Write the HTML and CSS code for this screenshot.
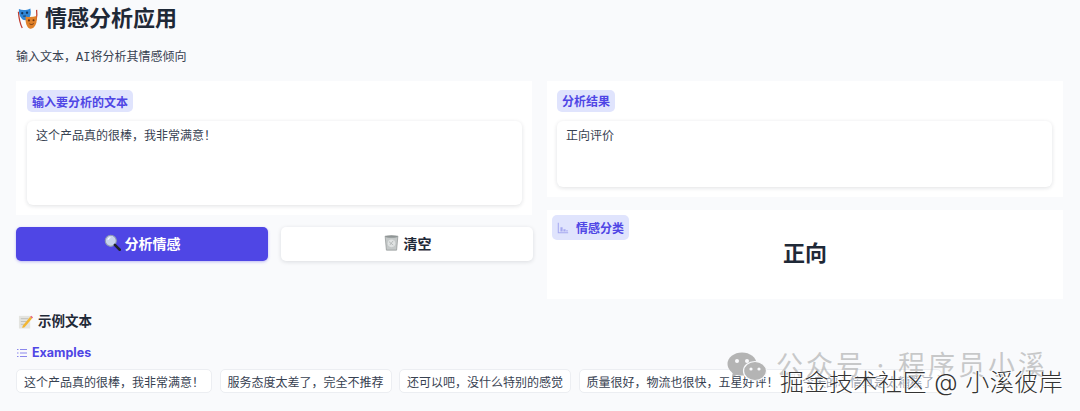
FILE: index.html
```html
<!DOCTYPE html>
<html lang="zh">
<head>
<meta charset="utf-8">
<title>情感分析应用</title>
<link rel="stylesheet" href="styles.css">
</head>
<body>
<main class="page">
  <h1 class="title">
    <svg class="emoji-title" viewBox="0 0 24 24" aria-hidden="true">
      <path d="M2.500 5c.5 6 1.500 12 4 17" fill="none" stroke="#c0392b" stroke-width="1.300"/>
      <path d="M21.500 3c.5 3 .3 7-.6 11" fill="none" stroke="#c0392b" stroke-width="1.300"/>
      <path d="M3 2c3 1.500 8 1.500 12-.5 1 5 .3 9-2.500 11.500-2.500 1.500-5.500 1-7-1.500C3.500 9 3 5.500 3 2z" fill="#2f86d6"/>
      <circle cx="6.500" cy="6.500" r="1.200" fill="#12345a"/><circle cx="11.500" cy="6" r="1.200" fill="#12345a"/>
      <path d="M7.500 9.500h3" stroke="#12345a" stroke-width="1"/>
      <path d="M10 10c3 .8 7 .8 11.500-.5.700 5-.3 9.500-3 12-2 1.800-5 1.500-6.500-1C10 18 9.800 14 10 10z" fill="#e0812a"/>
      <circle cx="13.500" cy="14" r="1.100" fill="#6b3410"/><circle cx="18.300" cy="13.800" r="1.100" fill="#6b3410"/>
      <path d="M14 17.500c1.500 1 3 1 4.500-.2" fill="none" stroke="#6b3410" stroke-width="1"/>
    </svg>
    <span>情感分析应用</span>
  </h1>
  <p class="subtitle">输入文本，<span class="mono">AI</span>将分析其情感倾向</p>

  <div class="columns">
    <section class="col">
      <div class="card card-input">
        <span class="pill">输入要分析的文本</span>
        <div class="field field-input">这个产品真的很棒，我非常满意！</div>
      </div>
      <div class="actions">
        <button class="btn btn-primary" type="button">
          <svg class="emoji-btn" viewBox="0 0 20 20" aria-hidden="true">
            <circle cx="8" cy="8" r="6.500" fill="#c7d3ee" stroke="#8e9ab0" stroke-width="1.300"/>
            <path d="M4.500 7a4 4 0 0 1 3-3" fill="none" stroke="#fff" stroke-width="1.200"/>
            <path d="M12.800 12.800L18.500 18.500" stroke="#20242c" stroke-width="3" stroke-linecap="round"/>
          </svg>
          <span>分析情感</span>
        </button>
        <button class="btn btn-secondary" type="button">
          <svg class="emoji-btn" viewBox="0 0 20 20" aria-hidden="true">
            <path d="M2.500 2.500h15l-1.500 16.500H4z" fill="#c4c8c8" stroke="#8d9292" stroke-width=".8"/>
            <ellipse cx="10" cy="3" rx="7.500" ry="1.500" fill="#8f9595"/>
            <circle cx="10" cy="11" r="4.500" fill="#dfe2e2"/>
            <path d="M7 9l5 4M8 13l4-5" stroke="#a5aaaa" stroke-width=".8"/>
          </svg>
          <span>清空</span>
        </button>
      </div>
    </section>

    <section class="col col-right">
      <div class="card card-result">
        <span class="pill">分析结果</span>
        <div class="field field-result">正向评价</div>
      </div>
      <div class="card card-class">
        <span class="pill pill-icon">
          <svg class="chart-icon" viewBox="0 0 14 14" aria-hidden="true">
            <path d="M1.500 1v11.500H13" fill="none" stroke="#a5a8f0" stroke-width="1.200"/>
            <path d="M4 6h2.500v5H4zM7.500 8.500H10V11H7.500zM10.800 9.500H12.500V11h-1.700z" fill="#a5a8f0"/>
          </svg>
          <span>情感分类</span>
        </span>
        <div class="class-value">正向</div>
      </div>
    </section>
  </div>

  <h2 class="section-title">
    <svg class="emoji-memo" viewBox="0 0 16 16" aria-hidden="true">
      <rect x="1" y="2" width="12" height="13.500" fill="#e4e4e0"/>
      <path d="M3 5h8M3 8h6M3 11h5" stroke="#b5b5b0" stroke-width=".8"/>
      <path d="M5 12.500L13 3l2 1.700L7 14l-2.500.8z" fill="#f2b632"/>
      <path d="M13 3l1-1.200 2 1.700-1 1.200z" fill="#e0607a"/>
    </svg>
    <span>示例文本</span>
  </h2>
  <div class="examples-label">
    <svg class="list-icon" viewBox="0 0 10 10" aria-hidden="true">
      <path d="M3 1.500h7M3 5h7M3 8.500h7" stroke="#8b86ec" stroke-width="1"/>
      <path d="M0 1.500h1.500M0 5h1.500M0 8.500h1.500" stroke="#8b86ec" stroke-width="1"/>
    </svg>
    <span>Examples</span>
  </div>
  <div class="chips">
    <button class="chip" type="button">这个产品真的很棒，我非常满意！</button>
    <button class="chip" type="button">服务态度太差了，完全不推荐</button>
    <button class="chip" type="button">还可以吧，没什么特别的感觉</button>
    <button class="chip" type="button">质量很好，物流也很快，五星好评！</button>
    <button class="chip chip-under" type="button">今天的心情真是太糟糕了</button>
  </div>
</main>

<div class="watermark">
  <svg class="wechat" viewBox="0 0 40 30" aria-hidden="true">
    <ellipse cx="15" cy="12" rx="14.500" ry="11.500" fill="#b4b4b4"/>
    <path d="M6 19l-1 6 7-3z" fill="#b4b4b4"/>
    <circle cx="10" cy="9" r="2" fill="#f9fafc"/><circle cx="20" cy="9" r="2" fill="#f9fafc"/>
    <ellipse cx="28" cy="19" rx="11.500" ry="9.500" fill="#b4b4b4" stroke="#f9fafc" stroke-width="1.200"/>
    <circle cx="24" cy="17" r="1.600" fill="#f9fafc"/><circle cx="32" cy="17" r="1.600" fill="#f9fafc"/>
  </svg>
  <span class="wm-account">公众号 · 程序员小溪</span>
  <span class="wm-site">掘金技术社区 @ 小溪彼岸</span>
</div>
</body>
</html>
```

FILE: styles.css
```css
* { box-sizing: border-box; }

html, body {
  margin: 0;
  height: 411px;
  overflow: hidden;
}

body {
  position: relative;
  background: #f9fafc;
  color: #1f2937;
  font-family: Inter, "Noto Sans CJK SC", sans-serif;
}

.page {
  padding: 4px 16px 0;
}

.title {
  display: flex;
  align-items: center;
  gap: 6px;
  margin: 0;
  height: 28px;
  font-size: 22px;
  line-height: 28px;
  font-weight: 700;
  color: #1f2937;
}

.emoji-title {
  width: 23px;
  height: 23px;
  flex: none;
}

.subtitle {
  margin: 15px 0 0;
  height: 20px;
  font-size: 12px;
  line-height: 20px;
  color: #374151;
}

.mono {
  font-family: "Liberation Mono", monospace;
}

.columns {
  display: grid;
  grid-template-columns: 517px 516px;
  gap: 14px;
  margin-top: 14px;
}

.col, .col-right {
  display: flex;
  flex-direction: column;
}

.card {
  background: #fff;
  display: flex;
  flex-direction: column;
}

.card-input {
  height: 134px;
  margin-right: 1px;
  padding: 9px 10px 10px 11px;
}

.card-result {
  height: 116px;
  padding: 9px 11px 10px 10px;
}

.card-class {
  height: 89px;
  margin-top: 13px;
  padding: 5px;
}

.pill {
  display: inline-flex;
  align-items: center;
  align-self: flex-start;
  height: 22px;
  padding: 0 5px;
  border-radius: 5px;
  background: #e0e4fd;
  color: #4f46e5;
  font-size: 12px;
  font-weight: 700;
}

.pill-icon {
  height: 25px;
  gap: 7px;
  padding: 0 5px;
}

.chart-icon {
  width: 12px;
  height: 12px;
}

.field {
  margin-top: 9px;
  padding: 6px 9px;
  background: #fff;
  border-radius: 6px;
  box-shadow: 0 1px 4px rgba(17, 24, 39, 0.13);
  font-size: 12px;
  line-height: 18px;
  color: #374151;
}

.field-input {
  height: 84px;
}

.field-result {
  height: 67px;
}

.class-value {
  text-align: center;
  font-size: 22px;
  line-height: 30px;
  font-weight: 600;
  color: #1f2937;
  margin-top: -2px;
}

.actions {
  display: grid;
  grid-template-columns: 252px 252px;
  gap: 13px;
  margin-top: 12px;
}

.btn {
  display: flex;
  align-items: center;
  justify-content: center;
  gap: 4px;
  height: 34px;
  padding: 0 0 3px;
  border: 0;
  border-radius: 5px;
  font: 700 14px Inter, "Noto Sans CJK SC", sans-serif;
}

.btn-primary {
  background: #4f46e5;
  color: #fff;
  box-shadow: 0 1px 3px rgba(79, 70, 229, 0.35);
}

.btn-secondary {
  background: #fff;
  color: #1f2937;
  box-shadow: 0 1px 4px rgba(17, 24, 39, 0.13);
}

.emoji-btn {
  width: 17px;
  height: 17px;
}

.section-title {
  display: flex;
  align-items: center;
  gap: 5px;
  margin: 12px 0 0 2px;
  height: 20px;
  font-size: 13.500px;
  line-height: 20px;
  font-weight: 700;
  color: #1f2937;
}

.emoji-memo {
  width: 15px;
  height: 15px;
}

.examples-label {
  display: flex;
  align-items: center;
  gap: 5px;
  margin: 14px 0 0 1px;
  height: 16px;
  font-size: 12.500px;
  line-height: 16px;
  font-weight: 700;
  color: #4f46e5;
}

.list-icon {
  width: 10px;
  height: 10px;
}

.chips {
  display: flex;
  gap: 7.500px;
  margin-top: 8px;
  white-space: nowrap;
}

.chip {
  height: 24px;
  padding: 0 7px;
  background: #fff;
  border: 1px solid #eceef2;
  border-radius: 5px;
  font: 400 12px Inter, "Noto Sans CJK SC", sans-serif;
  color: #374151;
}

.chip-under {
  color: #9ca3af;
}

.watermark {
  position: absolute;
  left: 727px;
  top: 352px;
  width: 345px;
  height: 50px;
  pointer-events: none;
}

.wechat {
  position: absolute;
  left: 0;
  top: 0;
  width: 40px;
  height: 30px;
}

.wm-account {
  position: absolute;
  left: 49px;
  top: -5px;
  font-size: 27px;
  line-height: 38px;
  letter-spacing: 3px;
  white-space: nowrap;
  color: rgba(150, 150, 150, 0.5);
}

.wm-site {
  position: absolute;
  left: 53px;
  top: 14px;
  font-size: 24px;
  line-height: 34px;
  letter-spacing: 0.5px;
  font-weight: 300;
  white-space: nowrap;
  color: #333;
  text-shadow: 1px 1px 0 #fff, -1px 0 0 #fff;
}
```
